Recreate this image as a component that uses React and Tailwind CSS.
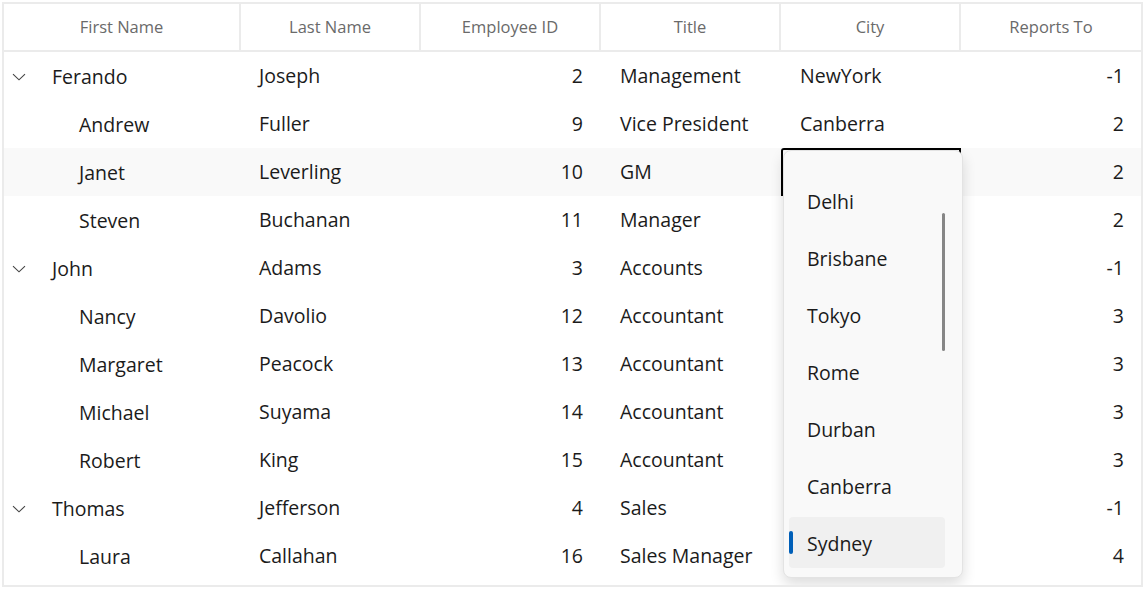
import React from "react";

const rows = [
  { f: "Ferando", l: "Joseph", id: 2, t: "Management", c: "NewYork", r: -1, parent: true },
  { f: "Andrew", l: "Fuller", id: 9, t: "Vice President", c: "Canberra", r: 2 },
  { f: "Janet", l: "Leverling", id: 10, t: "GM", c: "", r: 2, hl: true, edit: true },
  { f: "Steven", l: "Buchanan", id: 11, t: "Manager", c: "", r: 2 },
  { f: "John", l: "Adams", id: 3, t: "Accounts", c: "", r: -1, parent: true },
  { f: "Nancy", l: "Davolio", id: 12, t: "Accountant", c: "", r: 3 },
  { f: "Margaret", l: "Peacock", id: 13, t: "Accountant", c: "", r: 3 },
  { f: "Michael", l: "Suyama", id: 14, t: "Accountant", c: "", r: 3 },
  { f: "Robert", l: "King", id: 15, t: "Accountant", c: "", r: 3 },
  { f: "Thomas", l: "Jefferson", id: 4, t: "Sales", c: "", r: -1, parent: true },
  { f: "Laura", l: "Callahan", id: 16, t: "Sales Manager", c: "", r: 4 },
];

const cities = ["Delhi", "Brisbane", "Tokyo", "Rome", "Durban", "Canberra", "Sydney"];

const cols = "grid grid-cols-[237px_180px_180px_180px_180px_1fr]";

function Chevron() {
  return (
    <svg width="14" height="8" viewBox="0 0 14 8" className="shrink-0">
      <path d="M1 1.2 L7 6.8 L13 1.2" fill="none" stroke="#444" strokeWidth="1.1" />
    </svg>
  );
}

export default function App() {
  return (
    <div
      className="w-[1145px] h-[589px] bg-white overflow-hidden pt-[2px] pl-[2px]"
      style={{ fontFamily: '"Open Sans", "Noto Sans", sans-serif' }}
    >
      <div className="relative w-[1141px] h-[585px] border-2 border-[#ebebeb] overflow-hidden text-[#1b1b1b]">
        <div className={`${cols} h-[48px] border-b-2 border-[#ebebeb] text-[16.5px] text-[#6a6a6a]`}>
          {["First Name", "Last Name", "Employee ID", "Title", "City", "Reports To"].map((h, i) => (
            <div
              key={h}
              className={`flex items-center justify-center ${i < 5 ? "border-r-2 border-[#ebebeb]" : ""}`}
            >
              {h}
            </div>
          ))}
        </div>
        {rows.map((r) => (
          <div key={r.f} className={`${cols} h-[48px] text-[19.5px] ${r.hl ? "bg-[#f9f9f9]" : ""}`}>
            <div className="flex items-center pt-[2px]">
              {r.parent ? (
                <div className="flex items-center">
                  <span className="w-[48px] flex justify-start pl-[8px]">
                    <Chevron />
                  </span>
                  <span>{r.f}</span>
                </div>
              ) : (
                <span className="pl-[75px]">{r.f}</span>
              )}
            </div>
            <div className="flex items-center pl-[18px]">{r.l}</div>
            <div className="flex items-center justify-end pr-[18px]">{r.id}</div>
            <div className="flex items-center pl-[19px]">{r.t}</div>
            <div className={`flex items-center pl-[19px] ${r.edit ? "border-2 border-b-0 border-black rounded-tl-[3px]" : ""}`}>
              {r.c}
            </div>
            <div className="flex items-center justify-end pr-[17px]">{r.r}</div>
          </div>
        ))}

        <div className="absolute left-[779px] top-[146px] w-[180px] h-[428px] bg-[#f9f9f9] rounded-[8px] border border-[#e3e3e3] shadow-[0_6px_14px_rgba(0,0,0,0.14)] overflow-hidden">
          <div className="flex flex-col pt-[21px] pl-[5px] pr-[17px]">
            {cities.map((c) => {
              const sel = c === "Sydney";
              return (
                <div
                  key={c}
                  className={`relative h-[51px] my-[3px] rounded-[4px] flex items-center pl-[18px] pt-[3px] text-[19.5px] ${sel ? "bg-[#f0f0f0]" : ""}`}
                >
                  {sel && <span className="absolute left-0 top-[14px] w-[4px] h-[23px] rounded-full bg-[#005fb8]" />}
                  {c}
                </div>
              );
            })}
          </div>
          <div className="absolute left-[158px] top-[62px] w-[3px] h-[138px] rounded-full bg-[#868686]" />
        </div>
      </div>
    </div>
  );
}
